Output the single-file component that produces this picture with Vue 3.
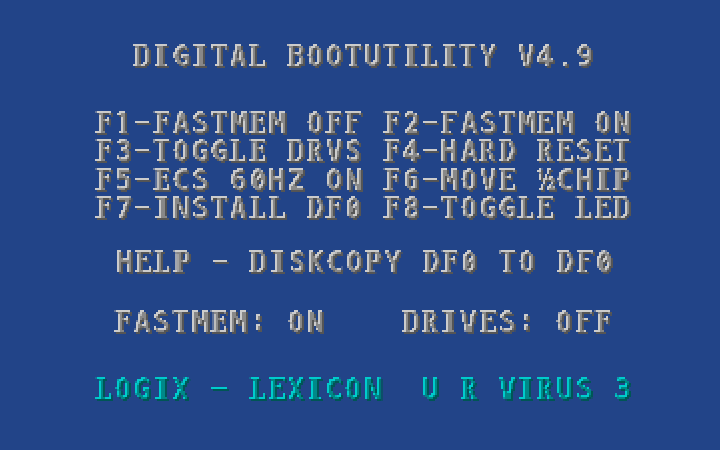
<script setup>
const lines = [
  { text: 'DIGITAL BOOTUTILITY V4.9', kind: 'title' },
  { text: 'F1-FASTMEM OFF F2-FASTMEM ON', kind: 'first' },
  { text: 'F3-TOGGLE DRVS F4-HARD RESET', kind: 'second' },
  { text: 'F5-ECS 60HZ ON F6-MOVE ½CHIP', kind: 'third' },
  { text: 'F7-INSTALL DF0 F8-TOGGLE LED', kind: 'fourth' },
  { text: 'HELP - DISKCOPY DF0 TO DF0', kind: 'help' },
  { text: 'FASTMEM: ON    DRIVES: OFF', kind: 'status' },
  { text: 'LOGIX - LEXICON  U R VIRUS 3', kind: 'credit' }
]

const bevels = [
  { id: 'silver', hi: '#cccccc', mid: '#888888', lo: '#555555' },
  { id: 'teal', hi: '#00cccc', mid: '#008888', lo: '#005555' }
]

// Ink box of each glyph inside its cell: left, top, width, height
const boxes = {
  I: [2.2, 0, 11.6, 22], 1: [3, 0, 10.5, 22], '-': [0.8, 9, 15.5, 3.6],
  '.': [7, 16.6, 4.4, 5.4], ':': [6.8, 3.6, 4.4, 17], '½': [0, 0, 18, 22],
  G: [0.8, 0, 15, 22], O: [1, 0, 14.2, 22], C: [1, 0, 14.6, 22],
  0: [1.2, 0, 14, 22], 2: [2, 0, 13.6, 22], 3: [2, 0, 13.6, 22],
  5: [2, 0, 13.6, 22], 6: [2, 0, 13.6, 22], 7: [2, 0, 13.6, 22],
  8: [2, 0, 13.6, 22], 9: [2, 0, 13.6, 22], S: [2, 0, 13.6, 22],
  A: [0.6, 0, 16, 22], M: [0.6, 0, 16, 22], U: [1, 0, 14.6, 22],
  V: [0.6, 0, 15.6, 22], N: [1, 0, 15, 22], H: [1, 0, 14.6, 22]
}
const plain = new Set([...'UVNMHKXYZ023456789OCSG-.:A'])
const families = { '½': '"Noto Sans"' }
const ctx = document.createElement('canvas').getContext('2d')
const cache = {}

function fit(ch) {
  if (ch === ' ') return {}
  if (cache[ch]) return cache[ch]
  const family = families[ch] || (plain.has(ch) ? '"DejaVu Sans Mono"' : '"DejaVu Serif"')
  ctx.font = `bold 300px ${family}`
  const m = ctx.measureText(ch)
  const k = 0.1
  const left = -m.actualBoundingBoxLeft * k
  const width = (m.actualBoundingBoxLeft + m.actualBoundingBoxRight) * k
  const up = m.actualBoundingBoxAscent * k
  const height = up + m.actualBoundingBoxDescent * k
  const asc = m.fontBoundingBoxAscent * k
  const desc = m.fontBoundingBoxDescent * k
  const baseline = (30 - asc - desc) / 2 + asc
  const [x, y, w, h] = boxes[ch] || [0.3, 0, 15.8, 22]
  const sx = w / width
  const sy = h / height
  cache[ch] = {
    fontFamily: family + ', monospace',
    transform: `translate(${x - left * sx}px, ${y - (baseline - up) * sy}px) scale(${sx}, ${sy})`
  }
  return cache[ch]
}
</script>

<template>
  <main class="screen">
    <svg class="defs" width="0" height="0" aria-hidden="true">
      <filter v-for="f in bevels" :id="f.id" :key="f.id" filterUnits="userSpaceOnUse" x="-4" y="-4" width="560" height="34" color-interpolation-filters="sRGB">
        <feFlood x="0" y="0" width="1" height="1" flood-color="#000" result="dot" />
        <feOffset in="dot" x="0" y="0" width="2" height="2" dx="0" dy="0" result="cell" />
        <feTile in="cell" x="-4" y="-4" width="560" height="34" result="grid" />
        <feGaussianBlur in="SourceAlpha" stdDeviation="0.4" result="soft" />
        <feComposite in="soft" in2="grid" operator="in" result="p00" />
        <feOffset in="p00" dx="1" dy="0" result="p10" />
        <feMerge result="row"><feMergeNode in="p00" /><feMergeNode in="p10" /></feMerge>
        <feOffset in="row" dx="0" dy="1" result="row2" />
        <feMerge result="mosaic"><feMergeNode in="row" /><feMergeNode in="row2" /></feMerge>
        <feComponentTransfer in="mosaic" result="g">
          <feFuncA type="linear" slope="5" intercept="-2" />
        </feComponentTransfer>
        <feOffset in="g" dx="2" dy="2" result="s" />
        <feFlood :flood-color="f.lo" />
        <feComposite in2="s" operator="in" result="low" />
        <feFlood :flood-color="f.mid" />
        <feComposite in2="g" operator="in" result="body" />
        <feComposite in="g" in2="s" operator="out" result="edge" />
        <feFlood :flood-color="f.hi" />
        <feComposite in2="edge" operator="in" result="high" />
        <feMerge>
          <feMergeNode in="low" />
          <feMergeNode in="body" />
          <feMergeNode in="high" />
        </feMerge>
      </filter>
    </svg>
    <div v-for="line in lines" :key="line.text" class="line" :class="line.kind">
      <span v-for="(ch, i) in line.text" :key="i" class="cell" :class="{ zero: ch === '0' }"><span class="glyph" :style="fit(ch)">{{ ch }}</span></span>
    </div>
  </main>
</template>

<style>
body {
  margin: 0;
  background: #224488;
}
</style>

<style scoped>
.screen {
  width: 720px;
  height: 450px;
  box-sizing: border-box;
  padding-top: 44px;
  background: #224488;
  overflow: hidden;
  display: flex;
  flex-direction: column;
}
.defs {
  position: absolute;
}
.line {
  display: flex;
  flex: none;
  width: max-content;
  height: 24px;
  margin-left: 95px;
  filter: url(#silver);
}
.cell {
  flex: none;
  width: 19.2px;
  height: 24px;
}
.glyph {
  display: block;
  width: 18px;
  font-size: 30px;
  line-height: 30px;
  font-weight: bold;
  white-space: pre;
  transform-origin: 0 0;
}
/* Slash across the zero */
.zero {
  position: relative;
}
.zero::after {
  content: '';
  position: absolute;
  left: 6.8px;
  top: 4px;
  width: 2.6px;
  height: 14px;
  background: #000;
  transform: rotate(32deg);
}
.title {
  margin-left: 133px;
  padding-left: 0.2px;
}
.first {
  margin-top: 43px;
}
.second {
  margin-top: 4px;
}
.third {
  margin-top: 5px;
}
.fourth {
  margin-top: 4px;
}
.help {
  margin-top: 30px;
  margin-left: 115px;
}
.status {
  margin-top: 36px;
  margin-left: 114px;
}
.credit {
  margin-top: 43px;
  filter: url(#teal);
}
</style>
